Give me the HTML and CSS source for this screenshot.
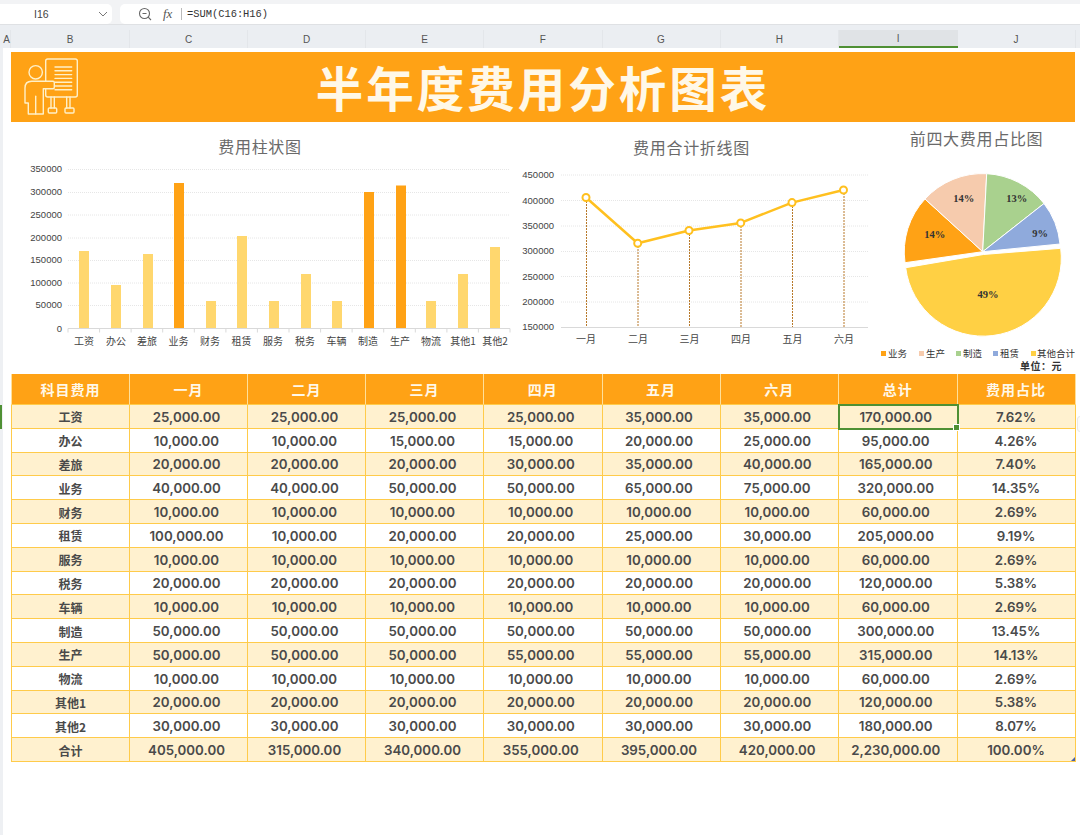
FILE: index.html
```html
<!DOCTYPE html>
<html lang="zh-CN">
<head>
<meta charset="utf-8">
<title>半年度费用分析图表</title>
<link rel="stylesheet" href="styles.css">
</head>
<body>
<div class="topbar">
  <div class="namebox"><span class="name">I16</span>
    <svg class="chev" width="10" height="6" viewBox="0 0 10 6"><path d="M1 1l4 4 4-4" fill="none" stroke="#777" stroke-width="1"/></svg>
  </div>
  <div class="formula">
    <svg class="zoomico" width="14" height="14" viewBox="0 0 14 14"><circle cx="6.5" cy="6.5" r="5" fill="none" stroke="#666" stroke-width="1.1"/><path d="M10.2 10.2L13 13M4.5 6.5h4" fill="none" stroke="#666" stroke-width="1.1"/></svg>
    <span class="fx">fx</span>
    <span class="fsep"></span>
    <span class="ftext">=SUM(C16:H16)</span>
  </div>
</div>
<div class="colhead">
  <span class="cola">A</span><span>B</span><span>C</span><span>D</span><span>E</span><span>F</span><span>G</span><span>H</span><span class="colsel">I</span><span>J</span>
</div>
<div class="sheet">
  <div class="rowstrip"><div class="rowmark"></div></div>
  <div class="content">
    <header class="banner">
      <svg class="teach" width="58" height="62" viewBox="22 55 58 62" fill="none" stroke="#fff0c8" stroke-width="1.4" stroke-linejoin="round" stroke-linecap="round">
        <circle cx="35.700" cy="71.300" r="6.700"/>
        <path d="M45.700 80V60q0-2 2-2h27.600q2 0 2 2v34q0 2-2 2H47.700q-2 0-2-2v-6"/>
        <path d="M55 66h16.700M55 69.800h16.700M55 73.600h16.700M55 77.400h16.700M55 81.200h16.700M55 85h16.700M55 88.700h16.700"/>
        <path d="M40 80.300h13q1.300 0 1.300 1.500v4.400q0 1.500-1.300 1.500H43.300V113H28.300V102H25V87q0-6.700 6.700-6.700z"/>
        <path d="M35.700 95.300V113"/>
        <path d="M51 96v11M54.300 96v11M66.700 96v11M70 96v11"/>
        <rect x="48.300" y="107" width="8.400" height="5" rx="1"/><rect x="65" y="107" width="9" height="5" rx="1"/>
      </svg>
      <h1 class="title">半年度费用分析图表</h1>
      <span></span>
    </header>
    <section class="charts">
      <svg class="chart bar" width="505" height="252" viewBox="11 122 505 252">
        <text class="ctitle" x="260" y="153" text-anchor="middle">费用柱状图</text>
        <g class="grid">
          <path d="M68 169.500H510M68 192.500H510M68 215H510M68 238H510M68 260.500H510M68 283H510M68 305.500H510"/>
        </g>
        <path class="axis" d="M68 328.500H510M68 328.500v4M99.600 328.500v4M131.100 328.500v4M162.700 328.500v4M194.300 328.500v4M225.900 328.500v4M257.400 328.500v4M289 328.500v4M320.600 328.500v4M352.100 328.500v4M383.700 328.500v4M415.300 328.500v4M446.900 328.500v4M478.400 328.500v4M510 328.500v4"/>
        <g class="ylab" text-anchor="end">
          <text x="62" y="172">350000</text><text x="62" y="195">300000</text><text x="62" y="218">250000</text><text x="62" y="241">200000</text><text x="62" y="263">150000</text><text x="62" y="286">100000</text><text x="62" y="308">50000</text><text x="62" y="332">0</text>
        </g>
        <g class="light">
          <rect x="79" y="251" width="10" height="77"/><rect x="111" y="285" width="10" height="43"/><rect x="143" y="254" width="10" height="74"/><rect x="206" y="301" width="10" height="27"/><rect x="237" y="236" width="10" height="92"/><rect x="269" y="301" width="10" height="27"/><rect x="301" y="274" width="10" height="54"/><rect x="332" y="301" width="10" height="27"/><rect x="426" y="301" width="10" height="27"/><rect x="458" y="274" width="10" height="54"/><rect x="490" y="247" width="10" height="81"/>
        </g>
        <g class="dark">
          <rect x="174" y="183" width="10" height="145"/><rect x="364" y="192" width="10" height="136"/><rect x="396" y="185.500" width="10" height="142.500"/>
        </g>
        <g class="xlab" text-anchor="middle">
          <text x="84" y="345">工资</text><text x="116" y="345">办公</text><text x="147" y="345">差旅</text><text x="178.500" y="345">业务</text><text x="210" y="345">财务</text><text x="241.500" y="345">租赁</text><text x="273" y="345">服务</text><text x="305" y="345">税务</text><text x="336.500" y="345">车辆</text><text x="368" y="345">制造</text><text x="400" y="345">生产</text><text x="431" y="345">物流</text><text x="463" y="345">其他1</text><text x="495" y="345">其他2</text>
        </g>
      </svg>
      <svg class="chart line" width="354" height="252" viewBox="516 122 354 252">
        <text class="ctitle" x="691.500" y="154" text-anchor="middle">费用合计折线图</text>
        <g class="grid"><path d="M561 175H868M561 200.500H868M561 226H868M561 251.500H868M561 276.500H868M561 302H868"/></g>
        <path class="axis" d="M561 327.500H868"/>
        <g class="ylab" text-anchor="end">
          <text x="554" y="178">450000</text><text x="554" y="204">400000</text><text x="554" y="229">350000</text><text x="554" y="254">300000</text><text x="554" y="280">250000</text><text x="554" y="305">200000</text><text x="554" y="330">150000</text>
        </g>
        <g class="drop">
          <path d="M586.500 198V327M638 243V327M689.500 231V327M741 223V327M792.500 203V327M844 190V327"/>
        </g>
        <polyline class="trend" points="586,197.500 637.700,243.200 689,230.500 740.700,222.900 792,202.600 843.500,190"/>
        <g class="dots">
          <circle cx="586" cy="197.500" r="3.500"/><circle cx="637.700" cy="243.200" r="3.500"/><circle cx="689" cy="230.500" r="3.500"/><circle cx="740.700" cy="222.900" r="3.500"/><circle cx="792" cy="202.600" r="3.500"/><circle cx="843.500" cy="190" r="3.500"/>
        </g>
        <g class="xlab" text-anchor="middle">
          <text x="586" y="343">一月</text><text x="638" y="343">二月</text><text x="689.500" y="343">三月</text><text x="741" y="343">四月</text><text x="792.500" y="343">五月</text><text x="844" y="343">六月</text>
        </g>
      </svg>
      <svg class="chart pie" width="205" height="252" viewBox="870 122 205 252">
        <text class="ctitle" x="976.500" y="144.500" text-anchor="middle">前四大费用占比图</text>
        <g class="slices">
          <path fill="#ffa215" d="M982.700 251.700L925 199A78 78 0 0 0 905 262.700Z"/>
          <path fill="#f6cbad" d="M982.700 251.700L986.700 173.700A78 78 0 0 0 925 199Z"/>
          <path fill="#a9d18e" d="M982.700 251.700L1044 203.500A78 78 0 0 0 986.700 173.700Z"/>
          <path fill="#8faadc" d="M982.700 251.700L1060 244A78 78 0 0 0 1044 203.500Z"/>
          <path fill="#ffd044" d="M983.300 254.500L1060.700 248.300A78 78 0 1 1 905.700 267.700Z"/>
        </g>
        <g class="plab" text-anchor="middle">
          <text x="963.700" y="202">14%</text><text x="1016.700" y="202">13%</text><text x="1040" y="236.500">9%</text><text x="934.700" y="238">14%</text><text x="988" y="298">49%</text>
        </g>
        <g class="legend">
          <rect x="881" y="351" width="5" height="5" fill="#ffa215"/><text x="888" y="356.500">业务</text>
          <rect x="919" y="351" width="5" height="5" fill="#f6cbad"/><text x="926" y="356.500">生产</text>
          <rect x="956" y="351" width="5" height="5" fill="#a9d18e"/><text x="963" y="356.500">制造</text>
          <rect x="993" y="351" width="5" height="5" fill="#8faadc"/><text x="1000" y="356.500">租赁</text>
          <rect x="1031" y="351" width="5" height="5" fill="#ffd044"/><text x="1037" y="356.500">其他合计</text>
        </g>
        <text class="unit" x="1020" y="370">单位：元</text>
      </svg>
    </section>
    <section class="table">
      <div class="row head"><span>科目费用</span><span>一月</span><span>二月</span><span>三月</span><span>四月</span><span>五月</span><span>六月</span><span>总计</span><span>费用占比</span></div>
      <div class="row band"><b>工资</b><span>25,000.00</span><span>25,000.00</span><span>25,000.00</span><span>25,000.00</span><span>35,000.00</span><span>35,000.00</span><span class="selected">170,000.00</span><span>7.62%</span></div>
      <div class="row"><b>办公</b><span>10,000.00</span><span>10,000.00</span><span>15,000.00</span><span>15,000.00</span><span>20,000.00</span><span>25,000.00</span><span>95,000.00</span><span>4.26%</span></div>
      <div class="row band"><b>差旅</b><span>20,000.00</span><span>20,000.00</span><span>20,000.00</span><span>30,000.00</span><span>35,000.00</span><span>40,000.00</span><span>165,000.00</span><span>7.40%</span></div>
      <div class="row"><b>业务</b><span>40,000.00</span><span>40,000.00</span><span>50,000.00</span><span>50,000.00</span><span>65,000.00</span><span>75,000.00</span><span>320,000.00</span><span>14.35%</span></div>
      <div class="row band"><b>财务</b><span>10,000.00</span><span>10,000.00</span><span>10,000.00</span><span>10,000.00</span><span>10,000.00</span><span>10,000.00</span><span>60,000.00</span><span>2.69%</span></div>
      <div class="row"><b>租赁</b><span>100,000.00</span><span>10,000.00</span><span>20,000.00</span><span>20,000.00</span><span>25,000.00</span><span>30,000.00</span><span>205,000.00</span><span>9.19%</span></div>
      <div class="row band"><b>服务</b><span>10,000.00</span><span>10,000.00</span><span>10,000.00</span><span>10,000.00</span><span>10,000.00</span><span>10,000.00</span><span>60,000.00</span><span>2.69%</span></div>
      <div class="row"><b>税务</b><span>20,000.00</span><span>20,000.00</span><span>20,000.00</span><span>20,000.00</span><span>20,000.00</span><span>20,000.00</span><span>120,000.00</span><span>5.38%</span></div>
      <div class="row band"><b>车辆</b><span>10,000.00</span><span>10,000.00</span><span>10,000.00</span><span>10,000.00</span><span>10,000.00</span><span>10,000.00</span><span>60,000.00</span><span>2.69%</span></div>
      <div class="row"><b>制造</b><span>50,000.00</span><span>50,000.00</span><span>50,000.00</span><span>50,000.00</span><span>50,000.00</span><span>50,000.00</span><span>300,000.00</span><span>13.45%</span></div>
      <div class="row band"><b>生产</b><span>50,000.00</span><span>50,000.00</span><span>50,000.00</span><span>55,000.00</span><span>55,000.00</span><span>55,000.00</span><span>315,000.00</span><span>14.13%</span></div>
      <div class="row"><b>物流</b><span>10,000.00</span><span>10,000.00</span><span>10,000.00</span><span>10,000.00</span><span>10,000.00</span><span>10,000.00</span><span>60,000.00</span><span>2.69%</span></div>
      <div class="row band"><b>其他1</b><span>20,000.00</span><span>20,000.00</span><span>20,000.00</span><span>20,000.00</span><span>20,000.00</span><span>20,000.00</span><span>120,000.00</span><span>5.38%</span></div>
      <div class="row"><b>其他2</b><span>30,000.00</span><span>30,000.00</span><span>30,000.00</span><span>30,000.00</span><span>30,000.00</span><span>30,000.00</span><span>180,000.00</span><span>8.07%</span></div>
      <div class="row band last"><b>合计</b><span>405,000.00</span><span>315,000.00</span><span>340,000.00</span><span>355,000.00</span><span>395,000.00</span><span>420,000.00</span><span>2,230,000.00</span><span class="corner">100.00%</span></div>
    </section>
  </div>
  <div class="sidetab"></div>
</div>
</body>
</html>
```
FILE: styles.css
```css
* { box-sizing: border-box; }
html, body { margin: 0; padding: 0; }
body {
  width: 1080px;
  height: 835px;
  overflow: hidden;
  background: #fff;
  font-family: "Noto Sans CJK SC", "Liberation Sans", sans-serif;
  color: #444;
}
.topbar {
  height: 25px;
  background: #f2f3f5;
  border-bottom: 1px solid #dfe1e4;
  padding-top: 4px;
  display: flex;
  gap: 8px;
}
.namebox {
  width: 112px;
  height: 20px;
  background: #fff;
  border-radius: 0 5px 5px 0;
  display: flex;
  align-items: center;
  padding-left: 34px;
  padding-right: 4px;
  justify-content: space-between;
}
.name { font: 10.500px "Liberation Sans", sans-serif; color: #444; }
.formula {
  flex: 1;
  height: 20px;
  background: #fff;
  border-radius: 5px 0 0 5px;
  display: flex;
  align-items: center;
  padding-left: 18px;
}
.fx {
  font: italic 13px "Liberation Serif", serif;
  color: #555;
  margin-left: 11px;
  width: 15px;
}
.fsep { width: 1px; height: 12px; background: #bbb; margin-left: 3px; }
.ftext {
  font: 10.400px "Liberation Mono", monospace;
  color: #333;
  margin-left: 5px;
}
.colhead {
  height: 23px;
  background: #ebeef2;
  display: grid;
  grid-template-columns: 11px 119px 118px 118px 118px 118.500px 118px 118.500px 118.500px 118px 1fr;
  align-items: stretch;
  font: 10px "Liberation Sans", sans-serif;
  color: #555;
  padding-top: 5px;
}
.colhead span {
  display: flex;
  align-items: center;
  justify-content: center;
  border-right: 1px solid #e3e6ea;
}
.colhead .cola { padding-left: 3px; }
.colhead .colsel {
  background: #e0e3e6;
  border-bottom: 2px solid #4f9034;
  border-right: 0;
}
.sheet { display: flex; height: 787px; position: relative; }
.rowstrip { width: 3px; background: #eef0f3; flex: none; }
.rowmark { width: 2px; height: 24px; margin-top: 357px; background: #4f9034; }
.content { margin-left: 8px; width: 1064px; padding-top: 4px; }
.sidetab {
  position: absolute;
  right: -4px;
  top: 368px;
  width: 7px;
  height: 16px;
  border: 1px solid #e8e8e8;
  border-radius: 3px;
  background: #fbfbfb;
}
.banner {
  height: 70px;
  background: #ffa215;
  display: grid;
  grid-template-columns: 1fr auto 1fr;
  align-items: center;
}
.teach { display: block; margin-left: 11px; }
.title {
  margin: 0;
  font: 700 47.500px/1 "Noto Sans CJK SC", sans-serif;
  letter-spacing: 3px;
  color: #fff8e8;
}
.charts { display: flex; height: 252px; }
.chart { display: block; flex: none; }
.ctitle { font: 400 16px "Noto Sans CJK SC", sans-serif; fill: #6a6a6a; letter-spacing: 0.700px; }
.grid path { fill: none; stroke: #e6e6e6; stroke-width: 1; stroke-dasharray: 1 1; }
.axis { fill: none; stroke: #d9d9d9; stroke-width: 1; }
.ylab { font: 9.500px "Liberation Sans", sans-serif; fill: #444; }
.xlab { font: 10px "Noto Sans CJK SC", sans-serif; fill: #444; }
.light rect { fill: #ffd76e; }
.dark rect { fill: #ffa215; }
.drop path { fill: none; stroke: #b8792a; stroke-width: 1; stroke-dasharray: 2 1; }
.trend { fill: none; stroke: #ffc01f; stroke-width: 2.500; stroke-linejoin: round; }
.dots circle { fill: #fff; stroke: #ffc01f; stroke-width: 2; }
.slices path { stroke: #fff; stroke-width: 1; }
.plab { font: 700 10.500px "Liberation Serif", serif; fill: #333; }
.legend { font: 9.500px "Noto Sans CJK SC", sans-serif; fill: #333; }
.unit { font: 700 10px "Noto Sans CJK SC", sans-serif; fill: #333; letter-spacing: 0.500px; }
.table { display: flex; flex-direction: column; }
.row {
  display: grid;
  grid-template-columns: 119px 118px 118px 118px 118.500px 118px 118.500px 118.500px 118px;
  height: 23.800px;
  font: 600 13.300px "Inter", "Noto Sans CJK SC", sans-serif;
  color: #4a4a4a;
  background: #fff;
}
.row > * {
  display: flex;
  align-items: center;
  justify-content: center;
  padding-top: 1px;
  font-weight: 600;
  border-right: 1px solid #ffcb4a;
  border-bottom: 1px solid #ffcb4a;
}
.row > b { font: 700 12px "Noto Sans CJK SC", "Inter", sans-serif; }
.row > :first-child { border-left: 1px solid #ffcb4a; }
.row:not(.head) > span:not(:last-child) { padding-right: 4px; }
.band { background: #fff1cf; }
.head {
  height: 31px;
  background: #ffa215;
  font: 700 14px "Noto Sans CJK SC", sans-serif;
  color: #fff8e8;
  letter-spacing: 1px;
}
.row.head > * {
  padding-top: 0;
  font-weight: 700;
  border-color: #ffe09a;
  border-bottom-color: #ffcb4a;
}
.row .selected {
  position: relative;
  outline: 2px solid #4f9034;
  outline-offset: -1px;
}
.selected::after {
  content: "";
  position: absolute;
  right: -3px;
  bottom: -3px;
  width: 5px;
  height: 5px;
  background: #4f9034;
  border: 1px solid #fff;
}
.corner { position: relative; }
.corner::after {
  content: "";
  position: absolute;
  right: 0;
  bottom: 0;
  width: 0;
  height: 0;
  border-left: 4px solid transparent;
  border-bottom: 4px solid #4a62a8;
}
```
